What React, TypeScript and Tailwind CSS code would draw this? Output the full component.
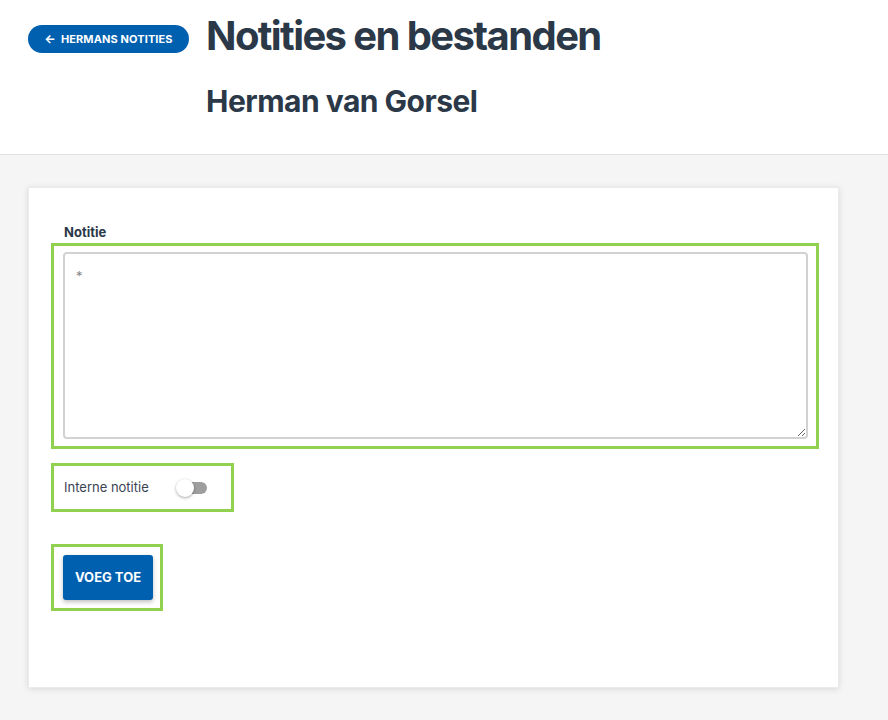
const App = () => {
  return (
    <div className="min-h-screen bg-[#f5f5f5]" style={{ fontFamily: "Inter, 'Noto Sans', sans-serif" }}>
      <header className="bg-white border-b border-[#e2e2e2] h-[155px] flex pl-[28px]">
        <div className="pt-[25px]">
          <button
            type="button"
            className="h-[28px] w-[161px] rounded-full bg-[#0060b0] text-white text-[11px] font-bold uppercase flex items-center justify-center gap-[5px] tracking-[0.01em]"
          >
            <span className="text-[12px] leading-none">←</span>
            Hermans notities
          </button>
        </div>
        <div className="ml-[17px] pt-[12px]">
          <h1 className="text-[40px] leading-[48px] font-bold text-[#2b3848] tracking-[-0.04em]">Notities en bestanden</h1>
          <h2 className="mt-[23px] text-[30px] leading-[36px] font-bold text-[#2b3848] tracking-[-0.017em]">Herman van Gorsel</h2>
        </div>
      </header>

      <div className="pt-[32px] pl-[28px]">
        <div className="w-[811px] h-[501px] bg-white shadow-[0_1px_6px_rgba(0,0,0,0.12)] border border-[#ebebeb] pt-[36px] pl-[22px] text-[#2b3848]">
          <label className="block pl-[13px] text-[13px] leading-[16px] font-bold">Notitie</label>
          <div className="mt-[3px] w-[768px] border-[3px] border-[#92d050] pl-[9px] pr-[8px] pt-[6px] pb-[7px]">
            <textarea
              placeholder="*"
              className="block w-full h-[187px] border-2 border-[#d2d2d2] rounded-[4px] px-[11px] py-[13px] text-[13px] placeholder:text-[#888] outline-none resize-y"
            />
          </div>

          <div className="mt-[14px] w-[183px] h-[49px] border-[3px] border-[#92d050] pl-[10px] flex items-center">
            <span className="text-[13px] text-[#3a4452]">Interne notitie</span>
            <div className="relative ml-[27px] w-[31px] h-[18px]">
              <div className="absolute left-[6px] top-[3px] w-[25px] h-[12px] rounded-full bg-[#9e9e9e]" />
              <div className="absolute left-0 top-0 w-[18px] h-[18px] rounded-full bg-white shadow-[0_1px_3px_rgba(0,0,0,0.35)]" />
            </div>
          </div>

          <div className="mt-[32px] w-[112px] h-[67px] border-[3px] border-[#92d050] pl-[9px] pt-[8px]">
            <button
              type="button"
              className="w-[90px] h-[45px] rounded-[3px] bg-[#0060b0] text-white text-[13px] font-bold uppercase shadow-[0_2px_4px_rgba(0,0,0,0.25)]"
            >
              Voeg toe
            </button>
          </div>
        </div>
      </div>
    </div>
  );
};

export default App;
